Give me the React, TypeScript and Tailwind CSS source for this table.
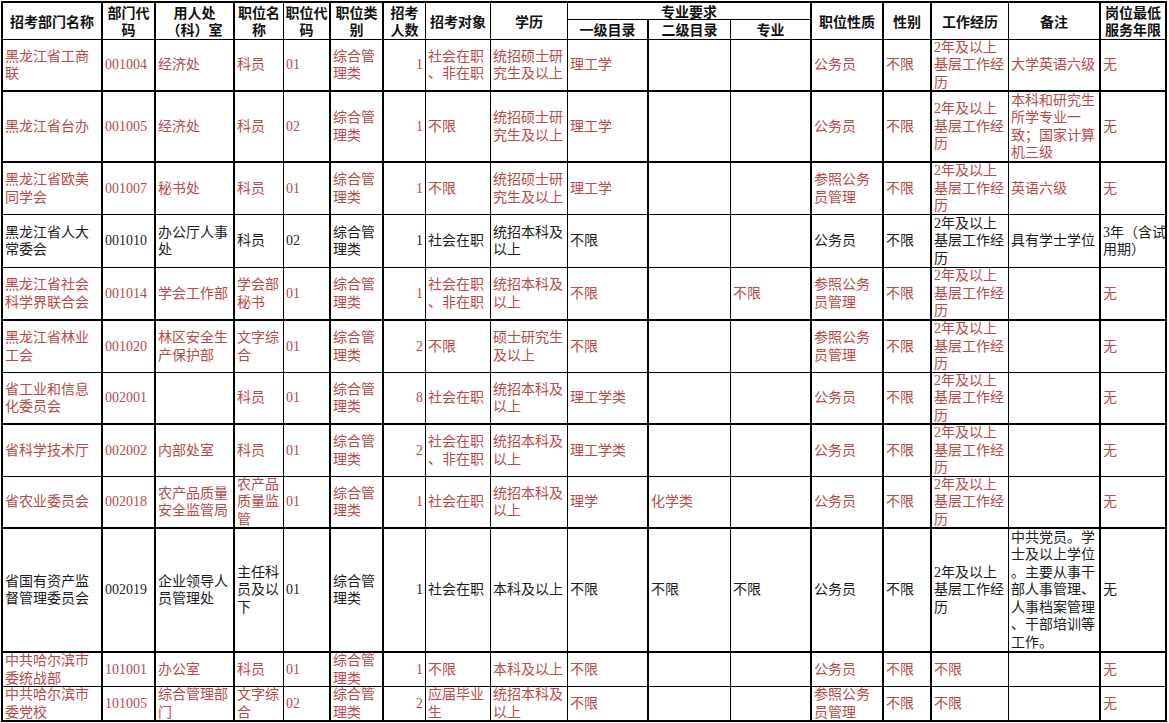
const RED = 'text-[#b94a48]';
const INK = 'text-[#1c1c1c]';

// right border of each column: true = 2px, false = 1px
const thickCol = [true, true, true, false, true, true, false, false, false, true, false, true, true, true, false, true, true];

const EXP = '2年及以上\n基层工作经\n历';
const ZH = '综合管\n理类';

interface Row {
  red: boolean;
  thick: boolean;
  cells: string[];
}

const rows: Row[] = [
  {
    red: true,
    thick: true,
    cells: ['黑龙江省工商\n联', '001004', '经济处', '科员', '01', ZH, '1', '社会在职\n、非在职', '统招硕士研\n究生及以上', '理工学', '', '', '公务员', '不限', EXP, '大学英语六级', '无'],
  },
  {
    red: true,
    thick: true,
    cells: ['黑龙江省台办', '001005', '经济处', '科员', '02', ZH, '1', '不限', '统招硕士研\n究生及以上', '理工学', '', '', '公务员', '不限', EXP, '本科和研究生\n所学专业一\n致；国家计算\n机三级', '无'],
  },
  {
    red: true,
    thick: false,
    cells: ['黑龙江省欧美\n同学会', '001007', '秘书处', '科员', '01', ZH, '1', '不限', '统招硕士研\n究生及以上', '理工学', '', '', '参照公务\n员管理', '不限', EXP, '英语六级', '无'],
  },
  {
    red: false,
    thick: false,
    cells: ['黑龙江省人大\n常委会', '001010', '办公厅人事\n处', '科员', '02', ZH, '1', '社会在职', '统招本科及\n以上', '不限', '', '', '公务员', '不限', EXP, '具有学士学位', '3年（含试\n用期）'],
  },
  {
    red: true,
    thick: true,
    cells: ['黑龙江省社会\n科学界联合会', '001014', '学会工作部', '学会部\n秘书', '01', ZH, '1', '社会在职\n、非在职', '统招本科及\n以上', '不限', '', '不限', '参照公务\n员管理', '不限', EXP, '', '无'],
  },
  {
    red: true,
    thick: false,
    cells: ['黑龙江省林业\n工会', '001020', '林区安全生\n产保护部', '文字综\n合', '01', ZH, '2', '不限', '硕士研究生\n及以上', '不限', '', '', '参照公务\n员管理', '不限', EXP, '', '无'],
  },
  {
    red: true,
    thick: true,
    cells: ['省工业和信息\n化委员会', '002001', '', '科员', '01', ZH, '8', '社会在职', '统招本科及\n以上', '理工学类', '', '', '公务员', '不限', EXP, '', '无'],
  },
  {
    red: true,
    thick: false,
    cells: ['省科学技术厅', '002002', '内部处室', '科员', '01', ZH, '2', '社会在职\n、非在职', '统招本科及\n以上', '理工学类', '', '', '公务员', '不限', EXP, '', '无'],
  },
  {
    red: true,
    thick: true,
    cells: ['省农业委员会', '002018', '农产品质量\n安全监管局', '农产品\n质量监\n管', '01', ZH, '1', '社会在职', '统招本科及\n以上', '理学', '化学类', '', '公务员', '不限', EXP, '', '无'],
  },
  {
    red: false,
    thick: true,
    cells: ['省国有资产监\n督管理委员会', '002019', '企业领导人\n员管理处', '主任科\n员及以\n下', '01', ZH, '1', '社会在职', '本科及以上', '不限', '不限', '不限', '公务员', '不限', EXP, '中共党员。学\n士及以上学位\n。主要从事干\n部人事管理、\n人事档案管理\n、干部培训等\n工作。', '无'],
  },
  {
    red: true,
    thick: false,
    cells: ['中共哈尔滨市\n委统战部', '101001', '办公室', '科员', '01', ZH, '1', '不限', '本科及以上', '不限', '', '', '公务员', '不限', '不限', '', '无'],
  },
  {
    red: true,
    thick: true,
    cells: ['中共哈尔滨市\n委党校', '101005', '综合管理部\n门', '文字综\n合', '02', ZH, '2', '应届毕业\n生', '统招本科及\n以上', '不限', '', '', '参照公务\n员管理', '不限', '不限', '', '无'],
  },
];

const headers: [string, number][] = [
  ['招考部门名称', 0],
  ['部门代\n码', 1],
  ['用人处\n（科）室', 2],
  ['职位名\n称', 3],
  ['职位代\n码', 4],
  ['职位类\n别', 5],
  ['招考\n人数', 6],
  ['招考对象', 7],
  ['学历', 8],
];

const tailHeaders: [string, number][] = [
  ['职位性质', 12],
  ['性别', 13],
  ['工作经历', 14],
  ['备注', 15],
  ['岗位最低\n服务年限', 16],
];

const sub: [string, number][] = [
  ['一级目录', 9],
  ['二级目录', 10],
  ['专业', 11],
];

const rb = (i: number) => (thickCol[i] ? 'border-r-2' : 'border-r');

const HeadCell = ({ text, col, span }: { text: string; col: number; span: boolean }) => (
  <div
    className={`${span ? 'row-span-2' : ''} ${rb(col)} flex items-center justify-center overflow-hidden border-b border-black text-center text-[14px] font-bold leading-[17px] whitespace-pre text-[#111]`}
  >
    <span>{text}</span>
  </div>
);

export default function App() {
  return (
    <div className="min-h-[723px] bg-white">
      <div
        className="ml-[1px] mt-[1px] grid w-fit grid-cols-[100px_53px_79px_49px_47px_53px_42px_65px_77px_81px_82px_81px_72px_48px_77px_92px_66px] grid-rows-[17px_20px_52px_71px_52px_53px_53px_52px_52px_52px_52px_124px_34px_35px] border-l-2 border-t-2 border-black"
        style={{ fontFamily: '"Noto Sans CJK SC", "Liberation Sans", sans-serif' }}
      >
        {headers.map(([t, c]) => (
          <HeadCell key={t} text={t} col={c} span />
        ))}
        <div className="col-span-3 flex items-center justify-center border-b border-r-2 border-black text-[14px] font-bold leading-[17px] text-[#111]">
          专业要求
        </div>
        {tailHeaders.map(([t, c]) => (
          <HeadCell key={t} text={t} col={c} span />
        ))}
        {sub.map(([t, c]) => (
          <HeadCell key={t} text={t} col={c} span={false} />
        ))}

        {rows.map((row, r) =>
          row.cells.map((cell, c) => (
            <div
              key={`${r}-${c}`}
              className={`${rb(c)} ${row.thick ? 'border-b-2' : 'border-b'} ${row.red ? RED : INK} ${
                c === 6 ? 'justify-end pr-[2px]' : 'pl-[2px]'
              } flex items-center overflow-hidden border-black text-[14px] leading-[17.5px] whitespace-pre`}
              style={{ fontFamily: '"Liberation Serif", "Noto Sans CJK SC", serif' }}
            >
              <span>{cell}</span>
            </div>
          )),
        )}
      </div>
    </div>
  );
}
